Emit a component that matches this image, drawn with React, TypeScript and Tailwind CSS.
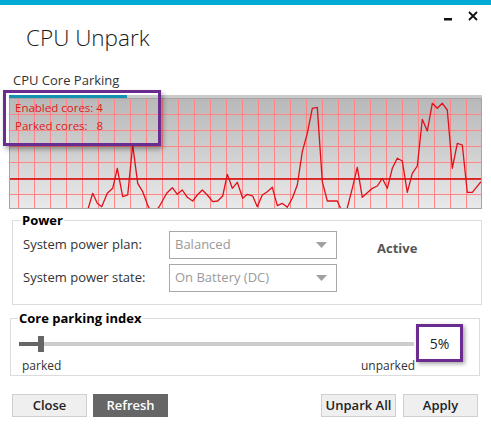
const points: [number, number][] = [
  [83, 220], [88, 209], [92.7, 193.3], [97.3, 203.3], [101.7, 206.7], [107.3, 193.3], [112.7, 188.3],
  [117.3, 168.3], [122.7, 196.7], [127.7, 195], [132.7, 145], [137.7, 183.3], [142.7, 191.7],
  [148.3, 206.7], [153, 214], [159, 207], [166.7, 193.3], [172.3, 187.7], [177.3, 194.3],
  [182.3, 190], [187.3, 197.3], [192.7, 201], [197.3, 195], [202.3, 190], [207.3, 195],
  [212.7, 201.7], [217.7, 201], [222.7, 196], [227.3, 174.3], [232.3, 188.3], [237.3, 182.3],
  [242.7, 198.3], [247.3, 194.3], [252.7, 196], [257.3, 206.7], [262.3, 195], [267.3, 191.7],
  [272.3, 187.3], [277.3, 205.7], [282.3, 203.3], [287.3, 207.3], [292.3, 198.3], [297.3, 185],
  [302.3, 151.7], [307.3, 133.3], [312.3, 108.3], [317.3, 107.3], [322.3, 181.7], [327.3, 201],
  [337.3, 201], [341.7, 211], [346.7, 210], [352.3, 188.3], [357.3, 167.3], [362.3, 197.3],
  [367.3, 192.7], [372.3, 188.3], [377.3, 186], [382.3, 178.3], [387.3, 188.3], [392.3, 168.3],
  [397.3, 158.3], [402.3, 161], [407.3, 192.3], [412.3, 173.3], [417.3, 166], [422.3, 119.3],
  [427.3, 131], [432.3, 103.3], [437.3, 108.3], [442.3, 103.3], [447.3, 110], [452.3, 168.3],
  [457.3, 143.3], [462.3, 145], [467.3, 192.3], [472.3, 192.3], [481, 181.7],
]

// chart interior starts at page (10, 99)
const line = points.map(([x, y]) => `${(x - 10).toFixed(1)},${(y - 99).toFixed(1)}`).join(' ')
const vLines = Array.from({ length: 29 }, (_, i) => 8.5 + i * 16)
const hLines = Array.from({ length: 6 }, (_, i) => 15.5 + i * 16)

function Chart() {
  return (
    <div className="relative h-[111px] border border-[#a5a5a5] bg-gradient-to-b from-[#b8b8b8] to-[#e9e9e9]">
      <svg width="471" height="109" className="block">
        {vLines.map((x) => (
          <line key={x} x1={x} y1="0" x2={x} y2="109" stroke="#ff8686" strokeWidth="1" />
        ))}
        {hLines.map((y) => (
          <line key={y} x1="0" y1={y} x2="471" y2={y} stroke="#ff8686" strokeWidth="1" />
        ))}
        <line x1="0" y1="80" x2="471" y2="80" stroke="#d40000" strokeWidth="1.5" />
        <polyline points={line} fill="none" stroke="#e0101a" strokeWidth="1.3" strokeLinejoin="round" />
      </svg>
      <div className="absolute left-[5px] top-[0px] text-[11.5px] leading-[18px] text-[#e01818]">
        <p>Enabled cores: 4</p>
        <p className="whitespace-pre">Parked cores:   8</p>
      </div>
    </div>
  )
}

function Dropdown({ value }: { value: string }) {
  return (
    <div className="w-[168px] h-[28px] border border-[#a8a8a8] flex items-center justify-between pl-[5px] pr-[9px] text-[13px] text-[#9a9a9a]">
      <span>{value}</span>
      <svg width="11" height="6" viewBox="0 0 11 6">
        <polygon points="0,0 11,0 5.5,6" fill="#a0a0a0" />
      </svg>
    </div>
  )
}

export default function App() {
  return (
    <div
      className="relative w-[491px] h-[438px] bg-white overflow-hidden text-[#222]"
      style={{ fontFamily: '"Open Sans", "Noto Sans", sans-serif' }}
    >
      <div className="h-[5px] bg-[#00aad5]" />

      <div className="flex justify-between items-start">
        <h1 className="ml-[26px] mt-[18px] text-[22.5px] leading-[30px] font-light text-[#1a1a1a]">CPU Unpark</h1>
        <div className="flex items-center gap-[16px] mt-[6px] mr-[13px]">
          <svg width="8" height="3" viewBox="0 0 8 3" className="mt-[7px]">
            <rect width="8" height="2.5" fill="#111" />
          </svg>
          <svg width="10" height="10" viewBox="0 0 10 10">
            <path d="M1 1 L9 9 M9 1 L1 9" stroke="#111" strokeWidth="1.8" />
          </svg>
        </div>
      </div>

      <p className="ml-[13px] mt-[19px] text-[13px] leading-[16px] text-[#333]">CPU Core Parking</p>

      <div className="ml-[9px] w-[473px] mt-[7px]">
        <div className="h-[3px] bg-[#cacaca]">
          <div className="h-full w-[118px] bg-[#168fb0]" />
        </div>
        <Chart />
      </div>

      <div className="relative ml-[12px] mt-[11px] w-[470px] h-[85px] border border-[#dcdcdc] pt-[10px] pl-[10px]">
        <span className="absolute -top-[9px] left-[8px] bg-white px-[1px] text-[13px] leading-[16px] font-bold text-black">Power</span>
        <div className="flex items-start">
          <div className="flex flex-col gap-[5px]">
            <div className="flex items-center">
              <span className="w-[146px] text-[13px] text-[#333]">System power plan:</span>
              <Dropdown value="Balanced" />
            </div>
            <div className="flex items-center">
              <span className="w-[146px] text-[13px] text-[#333]">System power state:</span>
              <Dropdown value="On Battery (DC)" />
            </div>
          </div>
          <span className="ml-[40px] mt-[8px] text-[13px] font-bold text-[#555]">Active</span>
        </div>
      </div>

      <div className="relative ml-[10px] mt-[13px] w-[470px] h-[58px] border border-[#dcdcdc]">
        <span className="absolute -top-[9px] left-[7px] bg-white px-[1px] text-[13px] leading-[16px] font-bold text-black">Core parking index</span>
        <div className="flex items-start pl-[8px] pt-[16px]">
          <div className="w-[395px]">
            <div className="relative h-[18px] flex items-center">
              <div className="h-[4px] w-full bg-[#cccccc]">
                <div className="h-full w-[21px] bg-[#666]" />
              </div>
              <div className="absolute left-[19px] top-[1px] w-[6px] h-[16px] bg-[#666]" />
            </div>
            <div className="flex justify-between mt-[5px] text-[12px] leading-[16px] text-[#333]">
              <span className="ml-[3px]">parked</span>
              <span className="-mr-[1px]">unparked</span>
            </div>
          </div>
          <div className="ml-[2px] -mt-[11px] w-[47px] h-[38px] border-[3px] border-[#6a2c91] bg-white flex items-center justify-center text-[14px] text-[#222] shadow-[2px_2px_4px_rgba(0,0,0,0.35)]">
            5%
          </div>
        </div>
      </div>

      <div className="flex ml-[12px] mt-[18px] w-[466px] text-[13px] font-semibold">
        <button className="w-[75px] h-[23px] bg-[#efefef] border border-[#cfcfcf] text-[#222]">Close</button>
        <button className="ml-[6px] w-[75px] h-[23px] bg-[#666] text-white">Refresh</button>
        <button className="ml-auto w-[75px] h-[23px] bg-[#efefef] border border-[#cfcfcf] text-[#222]">Unpark All</button>
        <button className="ml-[7px] w-[75px] h-[23px] bg-[#efefef] border border-[#cfcfcf] text-[#222]">Apply</button>
      </div>

      <div className="absolute left-[3px] top-[90px] w-[158px] h-[56px] border-[3px] border-[#6a2c91] shadow-[2px_3px_5px_rgba(0,0,0,0.35)]" />
    </div>
  )
}
